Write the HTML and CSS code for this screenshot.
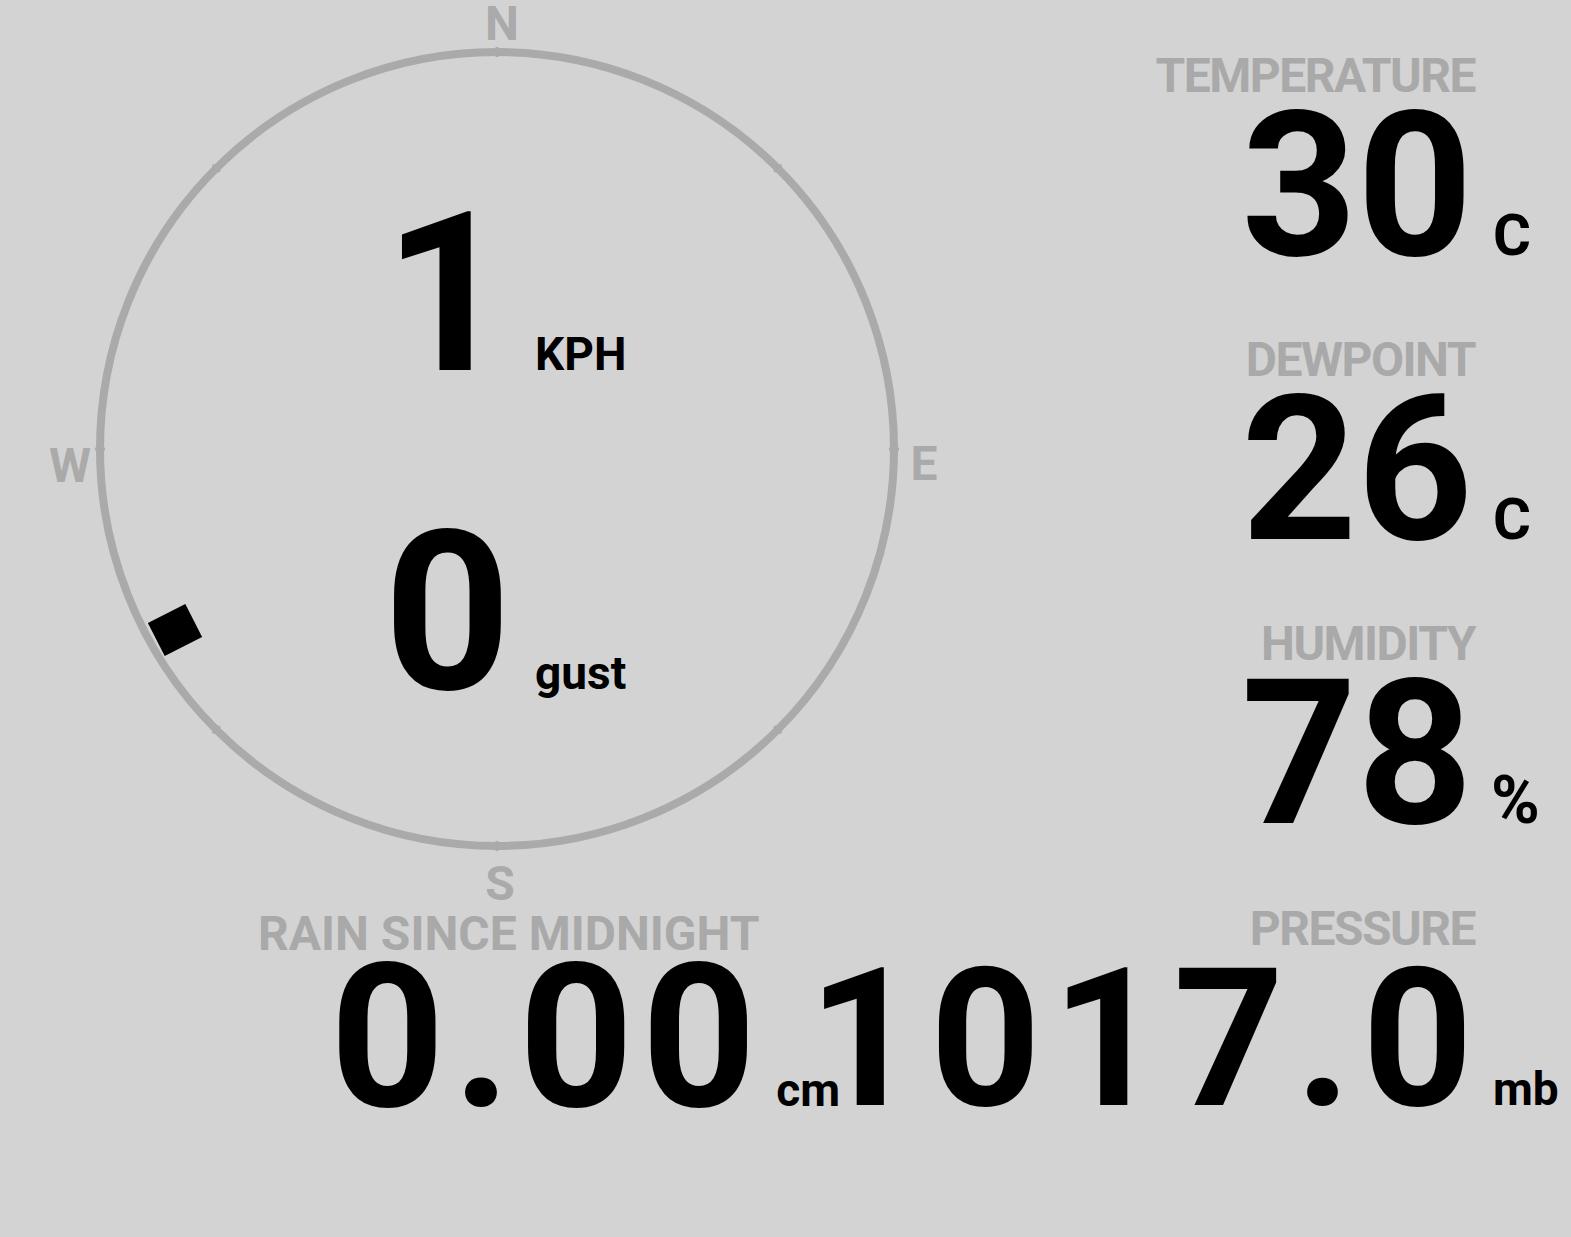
FILE: index.html
```html
<!DOCTYPE html>
<html lang="en">
<head>
    <meta charset="UTF-8">
    <meta name="viewport" content="width=device-width, initial-scale=1.0">
    <title>Weather Station</title>
    <link rel="stylesheet" href="styles.css">
</head>
<body>
    <div class="board">
        <div class="compass">
            <svg class="dial" width="1000" height="905" viewBox="0 0 1000 905">
                <circle cx="497" cy="449" r="397" fill="none" stroke="#aaa" stroke-width="8"/>
                <g transform="translate(497 449)" stroke="#aaa" stroke-width="3">
                    <line x1="0" y1="-392" x2="0" y2="-402"/>
                    <line x1="0" y1="-392" x2="0" y2="-402" transform="rotate(45)"/>
                    <line x1="0" y1="-392" x2="0" y2="-402" transform="rotate(90)"/>
                    <line x1="0" y1="-392" x2="0" y2="-402" transform="rotate(135)"/>
                    <line x1="0" y1="-392" x2="0" y2="-402" transform="rotate(180)"/>
                    <line x1="0" y1="-392" x2="0" y2="-402" transform="rotate(225)"/>
                    <line x1="0" y1="-392" x2="0" y2="-402" transform="rotate(270)"/>
                    <line x1="0" y1="-392" x2="0" y2="-402" transform="rotate(315)"/>
                </g>
                <g class="points">
                    <text x="502" y="40">N</text>
                    <text x="924" y="480">E</text>
                    <text x="500" y="900">S</text>
                    <text x="70" y="482">W</text>
                </g>
                <!-- wind direction marker -->
                <rect x="-21" y="-18.5" width="42" height="37" fill="#000" transform="translate(175 630) rotate(-27)"/>
            </svg>
            <div class="speed">
                <div class="speed-row">
                    <span class="speed-num">1</span>
                    <span class="speed-unit">KPH</span>
                </div>
                <div class="speed-row">
                    <span class="speed-num">0</span>
                    <span class="speed-unit">gust</span>
                </div>
            </div>
        </div>

        <div class="readings">
            <div class="reading">
                <div class="label">TEMPERATURE</div>
                <div class="value"><span class="num">30</span><span class="unit big">C</span></div>
            </div>
            <div class="reading">
                <div class="label">DEWPOINT</div>
                <div class="value"><span class="num">26</span><span class="unit big">C</span></div>
            </div>
            <div class="reading">
                <div class="label">HUMIDITY</div>
                <div class="value"><span class="num">78</span><span class="unit pct">%</span></div>
            </div>
        </div>

        <div class="reading rain">
            <div class="label">RAIN SINCE MIDNIGHT</div>
            <div class="value"><span class="num">0.00</span><span class="unit">cm</span></div>
        </div>

        <div class="reading pressure">
            <div class="label">PRESSURE</div>
            <div class="value"><span class="num">1017.0</span><span class="unit">mb</span></div>
        </div>
    </div>
</body>
</html>
```

FILE: styles.css
```css
body {
    margin: 0;
    background-color: #d3d3d3;
    font-family: Roboto, "Liberation Sans", sans-serif;
    font-weight: bold;
    color: #000;
    overflow: hidden;
}
.board {
    display: grid;
    grid-template-columns: 1000px 571px;
    width: 1571px;
}
.compass {
    position: relative;
    height: 905px;
}
.dial {
    position: absolute;
    top: 0;
    left: 0;
}
.points text {
    font-family: Roboto, "Liberation Sans", sans-serif;
    font-weight: bold;
    font-size: 48px;
    fill: #aaa;
    text-anchor: middle;
}
.speed {
    position: relative;
    display: flex;
    flex-direction: column;
    align-items: center;
    gap: 97px;
    padding-top: 183px;
    padding-left: 10px;
}
.speed-row {
    display: flex;
    align-items: baseline;
}
.speed-num {
    font-size: 222px;
    line-height: 222px;
}
.speed-unit {
    font-size: 46px;
    line-height: 46px;
    margin-left: 24px;
}
.readings {
    display: flex;
    flex-direction: column;
    gap: 70px;
    padding-top: 52px;
    min-width: 0;
}
.reading {
    min-width: 0;
}
.label {
    color: #a9a9a9;
    font-size: 48px;
    line-height: 48px;
    letter-spacing: -1.5px;
    text-align: right;
    padding-right: 96px;
    white-space: nowrap;
}
.value {
    display: flex;
    align-items: baseline;
    justify-content: flex-end;
    margin-top: 6px;
}
.num {
    font-size: 202px;
    line-height: 160px;
    white-space: nowrap;
}
.unit {
    flex: none;
    width: 98px;
    box-sizing: border-box;
    padding-left: 20px;
    font-size: 46px;
    line-height: 46px;
}
.unit.big {
    font-size: 58px;
    line-height: 58px;
}
.unit.pct {
    font-size: 66px;
    line-height: 66px;
    padding-left: 18px;
}
.rain .label {
    text-align: left;
    letter-spacing: 0;
    padding: 5px 0 0 258px;
}
.rain .value {
    justify-content: flex-start;
    margin-top: 0;
    padding-left: 330px;
}
.rain .num {
    font-size: 200px;
    letter-spacing: 8px;
}
.rain .unit {
    padding-left: 12px;
}
.pressure .num {
    font-size: 193px;
    letter-spacing: 11px;
    margin-right: -11px;
}
```
